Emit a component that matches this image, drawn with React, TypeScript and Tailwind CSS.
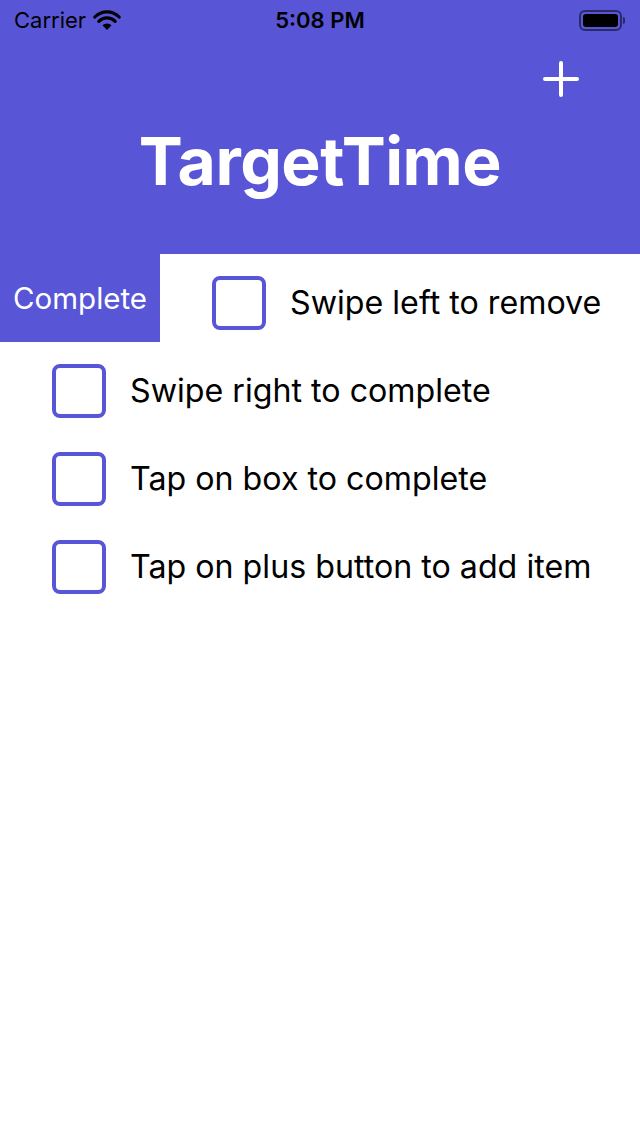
import React from "react";

const items = [
  "Swipe right to complete",
  "Tap on box to complete",
  "Tap on plus button to add item",
];

function Box() {
  return <div className="w-[54px] h-[54px] shrink-0 rounded-[8px] border-[4px] border-[#5856d6]" />;
}

export default function App() {
  return (
    <div className="w-[640px] h-[1136px] bg-white overflow-hidden" style={{ fontFamily: "Inter, 'Noto Sans', sans-serif" }}>
      <div className="bg-[#5856d6] h-[254px] flex flex-col">
        <div className="h-[40px] flex items-center px-[14px] relative text-black">
          <div className="flex items-center gap-[6px] text-[22px]">
            <span>Carrier</span>
            <svg width="30" height="22" viewBox="0 0 30 22">
              <path d="M15 21 L10.5 16.2 A6.5 6.5 0 0 1 19.5 16.2 Z" fill="#000" />
              <path d="M6.8 12.4 A11.5 11.5 0 0 1 23.2 12.4" stroke="#000" strokeWidth="3.2" fill="none" strokeLinecap="round" />
              <path d="M2.8 8 A17 17 0 0 1 27.2 8" stroke="#000" strokeWidth="3.2" fill="none" strokeLinecap="round" />
            </svg>
          </div>
          <span className="absolute left-1/2 -translate-x-1/2 text-[22px] font-semibold">5:08 PM</span>
          <div className="ml-auto flex items-center mr-[1px]">
            <div className="w-[43px] h-[21px] rounded-[6px] border-[2px] border-[#2a2a6a] p-[2px]">
              <div className="w-full h-full bg-black rounded-[3px]" />
            </div>
            <div className="w-[2px] h-[7px] bg-[#2a2a6a] rounded-r ml-[1px]" />
          </div>
        </div>
        <div className="flex justify-end pr-[61px] pt-[21px]">
          <svg width="36" height="36" viewBox="0 0 36 36">
            <path d="M18 2 V34 M2 18 H34" stroke="#fff" strokeWidth="4" strokeLinecap="round" />
          </svg>
        </div>
        <h1 className="text-white text-[66px] font-bold text-center leading-none mt-[31px] tracking-[-0.5px]">TargetTime</h1>
      </div>
      <div className="flex h-[88px] items-center">
        <div className="w-[160px] h-full bg-[#5856d6] flex items-center pl-[13px] text-white text-[29.5px]">Complete</div>
        <div className="flex items-center pl-[52px] pt-[10px]">
          <Box />
          <span className="ml-[24px] text-[32.2px] text-black whitespace-nowrap">Swipe left to remove</span>
        </div>
      </div>
      {items.map((t) => (
        <div key={t} className="flex h-[88px] items-center pl-[52px] pt-[10px]">
          <Box />
          <span className="ml-[24px] text-[32.2px] text-black whitespace-nowrap">{t}</span>
        </div>
      ))}
    </div>
  );
}
